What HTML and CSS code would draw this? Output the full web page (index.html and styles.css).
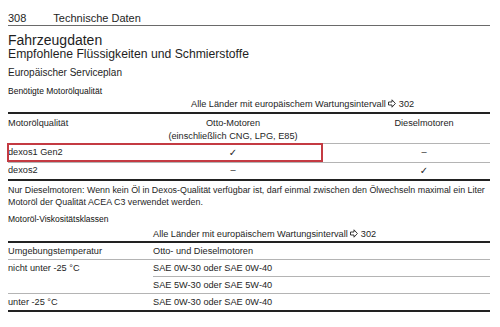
FILE: index.html
```html
<!DOCTYPE html>
<html lang="de">
<head>
    <meta charset="UTF-8">
    <title>Technische Daten - Fahrzeugdaten</title>
    <link rel="stylesheet" href="styles.css">
</head>
<body>
<div class="page">
    <div class="page-head">
        <span class="page-no">308</span>
        <span class="page-title">Technische Daten</span>
    </div>

    <h1 class="chapter">Fahrzeugdaten</h1>
    <h2 class="subchapter">Empfohlene Flüssigkeiten und Schmierstoffe</h2>
    <h3 class="section">Europäischer Serviceplan</h3>
    <h4 class="caption">Benötigte Motorölqualität</h4>

    <div class="quality-wrap">
        <table class="spec quality">
            <colgroup>
                <col class="c1">
                <col class="c2">
                <col class="c3">
            </colgroup>
            <tr class="scope">
                <td></td>
                <td colspan="2" class="scope-text">Alle Länder mit europäischem Wartungsintervall <svg class="ref" width="8" height="9" viewBox="0 0 8 9"><path d="M0.5 3 H4 V0.8 L7.4 4.5 L4 8.2 V6 H0.5 Z" fill="none" stroke="#222" stroke-width="0.9"/></svg> 302</td>
            </tr>
            <tr class="head">
                <td>Motorölqualität</td>
                <td class="mid">Otto-Motoren<br>(einschließlich CNG, LPG, E85)</td>
                <td class="mid">Dieselmotoren</td>
            </tr>
            <tr class="row-a">
                <td>dexos1 Gen2</td>
                <td class="mid"><span class="tick">✓</span></td>
                <td class="mid">–</td>
            </tr>
            <tr class="last row-b">
                <td>dexos2</td>
                <td class="mid">–</td>
                <td class="mid"><span class="tick">✓</span></td>
            </tr>
        </table>
        <div class="mark"></div>
    </div>

    <p class="note">Nur Dieselmotoren: Wenn kein Öl in Dexos-Qualität verfügbar ist, darf einmal zwischen den Ölwechseln maximal ein Liter Motoröl der Qualität ACEA C3 verwendet werden.</p>

    <h4 class="caption caption-2">Motoröl-Viskositätsklassen</h4>

    <table class="spec viscosity">
        <colgroup>
            <col class="v1">
            <col class="v2">
        </colgroup>
        <tr class="scope">
            <td></td>
            <td>Alle Länder mit europäischem Wartungsintervall <svg class="ref" width="8" height="9" viewBox="0 0 8 9"><path d="M0.5 3 H4 V0.8 L7.4 4.5 L4 8.2 V6 H0.5 Z" fill="none" stroke="#222" stroke-width="0.9"/></svg> 302</td>
        </tr>
        <tr>
            <td>Umgebungstemperatur</td>
            <td>Otto- und Dieselmotoren</td>
        </tr>
        <tr>
            <td rowspan="2">nicht unter -25 °C</td>
            <td>SAE 0W-30 oder SAE 0W-40</td>
        </tr>
        <tr>
            <td>SAE 5W-30 oder SAE 5W-40</td>
        </tr>
        <tr class="last">
            <td>unter -25 °C</td>
            <td>SAE 0W-30 oder SAE 0W-40</td>
        </tr>
    </table>
</div>
</body>
</html>
```

FILE: styles.css
```css
*{
    margin: 0;
    padding: 0;
}
body{
    background: #fff;
    color: #1e1e1e;
    font-family: "Liberation Sans", Arial, sans-serif;
}
.page{
    width: 482px;
    padding: 12px 8px 0 8px;
}

/* running head */
.page-head{
    display: flex;
    gap: 27px;
    font-size: 11px;
    line-height: 13px;
    border-bottom: 1px solid #6a6a6a;
}

.chapter{
    font-size: 14px;
    font-weight: normal;
    line-height: 14px;
    margin-top: 7px;
}
.subchapter{
    font-size: 12.2px;
    font-weight: normal;
    line-height: 12px;
    margin-top: 1px;
}
.section{
    font-size: 10px;
    font-weight: normal;
    line-height: 12px;
    margin-top: 7px;
}
.caption{
    font-size: 8.5px;
    font-weight: normal;
    line-height: 11px;
    margin-top: 7px;
    color: #111;
}

/* tables */
.spec{
    width: 100%;
    border-collapse: collapse;
    font-size: 9.2px;
    line-height: 16px;
}
.spec td{
    padding: 0;
    vertical-align: top;
    border-bottom: 1px solid #b4b4b4;
}
.spec .scope td{
    line-height: 15px;
    border-bottom: 2px solid #222;
}
.spec .last td{
    border-bottom: 2px solid #222;
}
.spec .mid{
    text-align: center;
}
.tick{
    font-family: "DejaVu Sans", sans-serif;
    font-size: 10px;
    font-weight: bold;
}
.ref{
    vertical-align: -1px;
}

.quality-wrap{
    position: relative;
}
.quality .c1{
    width: 150px;
}
.quality .c2{
    width: 150px;
}
.quality .scope-text{
    padding-left: 33px;
}
.quality td.mid:last-child{
    padding-left: 50px;
}
.quality .head td{
    padding-top: 3px;
    line-height: 13px;
}
.quality .row-a td{
    line-height: 17px;
}
.quality .row-b td{
    line-height: 15px;
}

/* red highlight drawn over the first row */
.mark{
    position: absolute;
    left: -1px;
    top: 46px;
    width: 316px;
    height: 19px;
    border: 2px solid #c43a42;
    box-sizing: border-box;
}

.note{
    font-size: 8.9px;
    line-height: 12px;
    margin-top: 3px;
}

.caption-2{
    margin-top: 6px;
}

.viscosity{
    margin-top: 2px;
}
.viscosity .scope td{
    line-height: 14px;
}
.viscosity .v1{
    width: 145px;
}
```
